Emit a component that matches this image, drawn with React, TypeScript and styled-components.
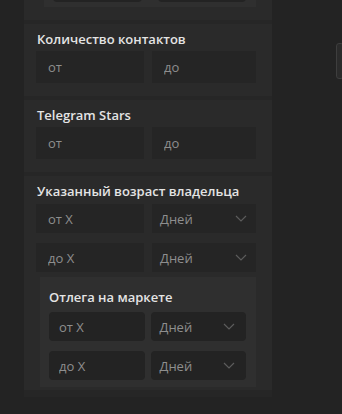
import { useLayoutEffect, useRef } from "react";
import styled, { createGlobalStyle } from "styled-components";

const GlobalStyle = createGlobalStyle`
  html, body {
    margin: 0;
    padding: 0;
    background: #232323;
    font-family: "Open Sans", "Liberation Sans", sans-serif;
  }
`;

type Range = { from: string; to: string };

const plainFilters: { title: string; range: Range }[] = [
  { title: "Количество контактов", range: { from: "от", to: "до" } },
  { title: "Telegram Stars", range: { from: "от", to: "до" } },
];

export default function App() {
  const scrollRef = useRef<HTMLDivElement>(null);
  const anchorRef = useRef<HTMLDivElement>(null);

  useLayoutEffect(() => {
    if (scrollRef.current && anchorRef.current) {
      scrollRef.current.scrollTop = anchorRef.current.offsetTop - 24;
    }
  }, []);

  return (
    <>
      <GlobalStyle />
      <Viewport ref={scrollRef}>
        <Column>
          {/* bottom of the previous filter, scrolled mostly out of view */}
          <Section>
            <SubCard $inset={8}>
              <SubRow $inputGap={16}>
                <SubInput aria-label="от" />
                <SubInput aria-label="до" />
              </SubRow>
            </SubCard>
          </Section>

          {plainFilters.map((f, i) => (
            <Section key={f.title} ref={i === 0 ? anchorRef : undefined}>
              <Title>{f.title}</Title>
              <Pair>
                <Input placeholder={f.range.from} />
                <Input placeholder={f.range.to} />
              </Pair>
            </Section>
          ))}

          <Section $tight>
            <Title>Указанный возраст владельца</Title>
            <Rows>
              <Pair>
                <Input $compact placeholder="от X" />
                <Select $compact>
                  <span>Дней</span>
                  <Chevron />
                </Select>
              </Pair>
              <Pair>
                <Input $compact placeholder="до X" />
                <Select $compact>
                  <span>Дней</span>
                  <Chevron />
                </Select>
              </Pair>
            </Rows>
            <SubCard $inset={4}>
              <SubTitle>Отлега на маркете</SubTitle>
              <SubRows>
                <SubRow $inputGap={6}>
                  <SubInput placeholder="от X" />
                  <SubSelect>
                    <span>Дней</span>
                    <Chevron />
                  </SubSelect>
                </SubRow>
                <SubRow $inputGap={6}>
                  <SubInput placeholder="до X" />
                  <SubSelect>
                    <span>Дней</span>
                    <Chevron />
                  </SubSelect>
                </SubRow>
              </SubRows>
            </SubCard>
          </Section>
        </Column>
        <PageEnd />
      </Viewport>
      <ScrollThumb />
    </>
  );
}

function Chevron() {
  return (
    <svg width="12" height="7" viewBox="0 0 12 7" fill="none">
      <path d="M1 1 L6 6 L11 1" stroke="#5c5c5c" strokeWidth="1.2" />
    </svg>
  );
}

const Viewport = styled.div`
  height: 100vh;
  overflow-y: auto;
  scrollbar-width: none;
  &::-webkit-scrollbar {
    display: none;
  }
`;

const PageEnd = styled.div`
  height: 80px;
`;

const Column = styled.div`
  width: 248px;
  margin-left: 24px;
  background: #262626;
  display: flex;
  flex-direction: column;
  gap: 4px;
  padding-bottom: 7px;
`;

const Section = styled.div<{ $tight?: boolean }>`
  background: #2a2a2a;
  padding: 6px 16px ${(p) => (p.$tight ? 3 : 13)}px 12px;
  display: flex;
  flex-direction: column;
`;

const Title = styled.div`
  color: #e4e4e4;
  font-size: 13px;
  font-weight: 600;
  line-height: 18px;
  padding-left: 1px;
  margin-bottom: 3px;
`;

const Pair = styled.div`
  display: grid;
  grid-template-columns: 108px 1fr;
  gap: 8px;
`;

const Rows = styled.div`
  display: flex;
  flex-direction: column;
  gap: 10px;
  margin-top: 1px;
`;

const Input = styled.input<{ $compact?: boolean }>`
  height: ${(p) => (p.$compact ? 29 : 32)}px;
  box-sizing: border-box;
  border: none;
  outline: none;
  background: #252525;
  color: #9a9a9a;
  padding: 0 12px;
  font-family: inherit;
  font-size: 13px;
  min-width: 0;
  &::placeholder {
    color: #8e8e8e;
  }
`;

const Select = styled.div<{ $compact?: boolean }>`
  height: ${(p) => (p.$compact ? 29 : 32)}px;
  background: #252525;
  color: #8e8e8e;
  font-size: 13px;
  display: flex;
  align-items: center;
  justify-content: space-between;
  padding: 0 9px 0 8px;
`;

const SubCard = styled.div<{ $inset: number }>`
  margin: 5px 0 0 ${(p) => p.$inset}px;
  background: #2f2f2f;
  padding: 11px 10px 5px 9px;
  display: flex;
  flex-direction: column;
`;

const SubTitle = styled.div`
  color: #e4e4e4;
  font-size: 13px;
  font-weight: 600;
  line-height: 18px;
  margin-bottom: 6px;
`;

const SubRows = styled.div`
  display: flex;
  flex-direction: column;
  gap: 10px;
  padding-bottom: 2px;
`;

const SubRow = styled.div<{ $inputGap: number }>`
  display: grid;
  grid-template-columns: 1fr 1fr;
  gap: ${(p) => p.$inputGap}px;
`;

const SubInput = styled(Input)`
  height: 29px;
  border-radius: 4px;
  background: #232323;
  padding: 0 10px;
`;

const SubSelect = styled(Select)`
  height: 29px;
  border-radius: 4px;
  background: #232323;
  padding: 0 11px 0 9px;
`;

const ScrollThumb = styled.div`
  position: fixed;
  right: -2px;
  top: 43px;
  width: 6px;
  height: 34px;
  border-radius: 3px;
  border: 1px solid #3e3e3e;
  background: #2b2b2b;
`;
